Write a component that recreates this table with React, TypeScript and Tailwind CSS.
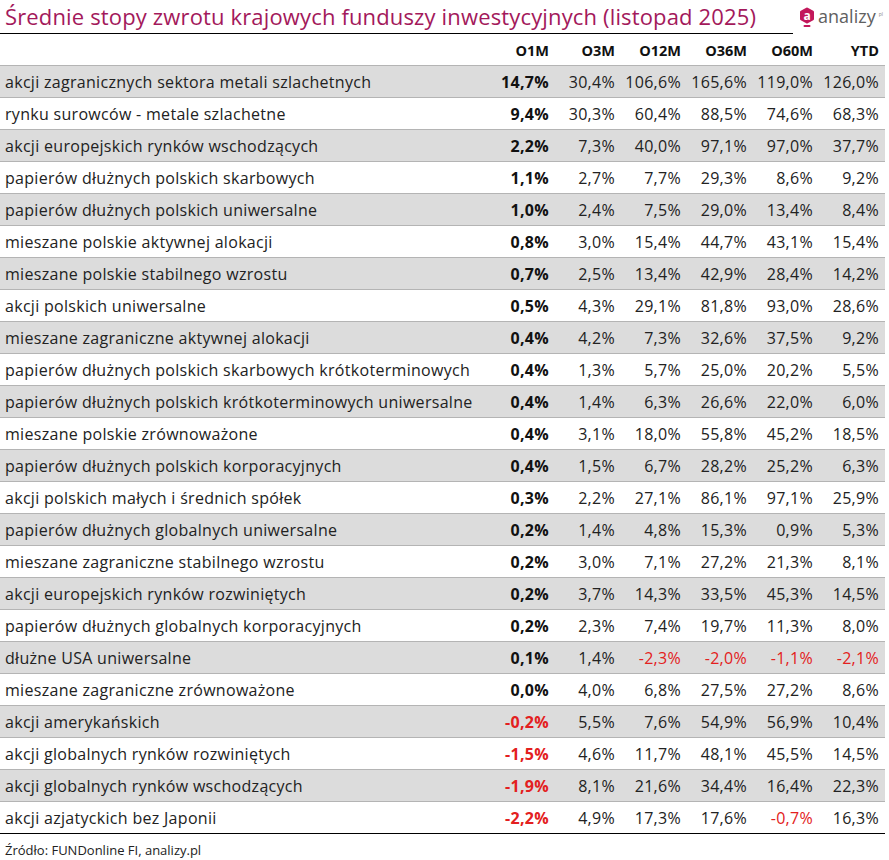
import React from "react";

type Row = { name: string; v: string[] };

const rows: Row[] = [
  { name: "akcji zagranicznych sektora metali szlachetnych", v: ["14,7%", "30,4%", "106,6%", "165,6%", "119,0%", "126,0%"] },
  { name: "rynku surowców - metale szlachetne", v: ["9,4%", "30,3%", "60,4%", "88,5%", "74,6%", "68,3%"] },
  { name: "akcji europejskich rynków wschodzących", v: ["2,2%", "7,3%", "40,0%", "97,1%", "97,0%", "37,7%"] },
  { name: "papierów dłużnych polskich skarbowych", v: ["1,1%", "2,7%", "7,7%", "29,3%", "8,6%", "9,2%"] },
  { name: "papierów dłużnych polskich uniwersalne", v: ["1,0%", "2,4%", "7,5%", "29,0%", "13,4%", "8,4%"] },
  { name: "mieszane polskie aktywnej alokacji", v: ["0,8%", "3,0%", "15,4%", "44,7%", "43,1%", "15,4%"] },
  { name: "mieszane polskie stabilnego wzrostu", v: ["0,7%", "2,5%", "13,4%", "42,9%", "28,4%", "14,2%"] },
  { name: "akcji polskich uniwersalne", v: ["0,5%", "4,3%", "29,1%", "81,8%", "93,0%", "28,6%"] },
  { name: "mieszane zagraniczne aktywnej alokacji", v: ["0,4%", "4,2%", "7,3%", "32,6%", "37,5%", "9,2%"] },
  { name: "papierów dłużnych polskich skarbowych krótkoterminowych", v: ["0,4%", "1,3%", "5,7%", "25,0%", "20,2%", "5,5%"] },
  { name: "papierów dłużnych polskich krótkoterminowych uniwersalne", v: ["0,4%", "1,4%", "6,3%", "26,6%", "22,0%", "6,0%"] },
  { name: "mieszane polskie zrównoważone", v: ["0,4%", "3,1%", "18,0%", "55,8%", "45,2%", "18,5%"] },
  { name: "papierów dłużnych polskich korporacyjnych", v: ["0,4%", "1,5%", "6,7%", "28,2%", "25,2%", "6,3%"] },
  { name: "akcji polskich małych i średnich spółek", v: ["0,3%", "2,2%", "27,1%", "86,1%", "97,1%", "25,9%"] },
  { name: "papierów dłużnych globalnych uniwersalne", v: ["0,2%", "1,4%", "4,8%", "15,3%", "0,9%", "5,3%"] },
  { name: "mieszane zagraniczne stabilnego wzrostu", v: ["0,2%", "3,0%", "7,1%", "27,2%", "21,3%", "8,1%"] },
  { name: "akcji europejskich rynków rozwiniętych", v: ["0,2%", "3,7%", "14,3%", "33,5%", "45,3%", "14,5%"] },
  { name: "papierów dłużnych globalnych korporacyjnych", v: ["0,2%", "2,3%", "7,4%", "19,7%", "11,3%", "8,0%"] },
  { name: "dłużne USA uniwersalne", v: ["0,1%", "1,4%", "-2,3%", "-2,0%", "-1,1%", "-2,1%"] },
  { name: "mieszane zagraniczne zrównoważone", v: ["0,0%", "4,0%", "6,8%", "27,5%", "27,2%", "8,6%"] },
  { name: "akcji amerykańskich", v: ["-0,2%", "5,5%", "7,6%", "54,9%", "56,9%", "10,4%"] },
  { name: "akcji globalnych rynków rozwiniętych", v: ["-1,5%", "4,6%", "11,7%", "48,1%", "45,5%", "14,5%"] },
  { name: "akcji globalnych rynków wschodzących", v: ["-1,9%", "8,1%", "21,6%", "34,4%", "16,4%", "22,3%"] },
  { name: "akcji azjatyckich bez Japonii", v: ["-2,2%", "4,9%", "17,3%", "17,6%", "-0,7%", "16,3%"] },
];

const heads = ["O1M", "O3M", "O12M", "O36M", "O60M", "YTD"];

// analizy.pl mark: rounded magenta hexagon with a small bar underneath
function Logo() {
  return (
    <div className="flex items-start gap-[3px] pt-[7px] pr-[2px]">
      <svg width="16" height="22" viewBox="0 0 16 22">
        <path d="M8 2 L13.5 5 L13.5 12 L8 15 L2.5 12 L2.5 5 Z" fill="#c2185b" stroke="#c2185b" strokeWidth="3" strokeLinejoin="round" />
        <rect x="4.5" y="18" width="7" height="2" rx="1" fill="#c2185b" />
        <text x="8" y="12.5" textAnchor="middle" fontSize="12" fontWeight="700" fill="#fff" fontFamily="'Open Sans', sans-serif">a</text>
      </svg>
      <span className="text-[18px] leading-[18px] text-[#606060] font-['Open_Sans',sans-serif]">analizy</span>
      <span className="text-[5px] leading-none text-[#888] mt-[5px]">pl</span>
    </div>
  );
}

export default function App() {
  return (
    <div className="w-[889px] h-[860px] bg-white font-['Open_Sans',sans-serif] text-[#222]">
      <div className="flex items-start w-[885px]">
        <div className="w-[793px] h-[34px] border-b-[1.5px] border-black pl-[5px] pt-[1px]">
          <h1 className="text-[22px] leading-[30px] text-[#a3195b] font-normal whitespace-nowrap tracking-[0.15px]">
            Średnie stopy zwrotu krajowych funduszy inwestycyjnych (listopad 2025)
          </h1>
        </div>
        <div className="flex-1 flex justify-end">
          <Logo />
        </div>
      </div>
      <div className="w-[885px]">
        <div className="grid grid-cols-[489px_repeat(6,66px)] h-[32px] items-center border-b border-[#b4b4b4] text-[14.5px] font-bold text-[#111] pt-[2px]">
          <div />
          {heads.map((h) => (
            <div key={h} className="text-right pr-[6px]">{h}</div>
          ))}
        </div>
        {rows.map((r, i) => (
          <div
            key={r.name}
            className={
              "grid grid-cols-[489px_repeat(6,66px)] h-[32px] items-center text-[16px] tracking-[0.3px] " +
              (i === rows.length - 1 ? "border-b-[1.5px] border-black " : "border-b border-[#b4b4b4] ") +
              (i % 2 === 0 ? "bg-[#dcdcdc]" : "bg-white")
            }
          >
            <div className="pl-[5px] whitespace-nowrap">{r.name}</div>
            {r.v.map((v, j) => (
              <div
                key={j}
                className={
                  "text-right pr-[6px] " +
                  (j === 0 ? "font-bold text-[#111] " : "") +
                  (v.startsWith("-") ? "text-[#e32020]" : "")
                }
              >
                {v}
              </div>
            ))}
          </div>
        ))}
      </div>
      <div className="pl-[5px] pt-[7px] text-[13px] text-[#222]">Źródło: FUNDonline FI, analizy.pl</div>
    </div>
  );
}
